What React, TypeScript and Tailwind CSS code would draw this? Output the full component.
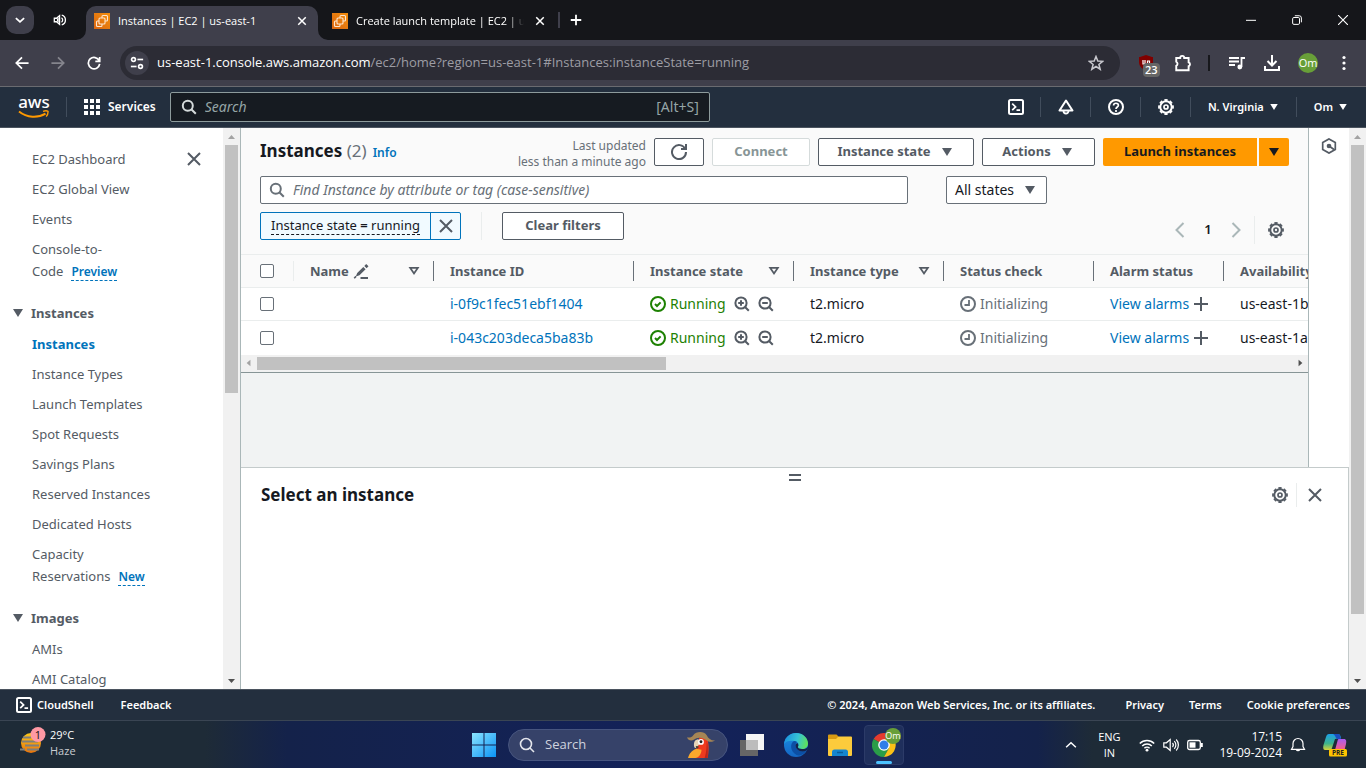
import type { ReactNode } from "react";

type IconProps = { className?: string };

function Svg({ className = "size-4", children, w = 2 }: { className?: string; children: ReactNode; w?: number }) {
  return (
    <svg viewBox="0 0 16 16" fill="none" stroke="currentColor" strokeWidth={w} className={`shrink-0 ${className}`} aria-hidden="true">
      {children}
    </svg>
  );
}

const Caret = ({ className }: IconProps) => (
  <Svg className={className}><path d="M3 4h10l-5 8z" fill="currentColor" stroke="none" /></Svg>
);
const SortCaret = () => (
  <Svg className="size-4 text-[#545b64]"><path d="M4.200 4.900h7.600L8 10.500z" strokeWidth="1.8" /></Svg>
);
const Search = ({ className }: IconProps) => (
  <Svg className={className}><circle cx="6.800" cy="6.800" r="5" /><path d="m10.300 10.300 4.500 4.500" /></Svg>
);
const Close = ({ className }: IconProps) => (
  <Svg className={className}><path d="m2 2 12 12M14 2 2 14" /></Svg>
);
const Gear = ({ className }: IconProps) => (
  <Svg className={className}>
    <circle cx="8" cy="8" r="5.7" strokeWidth="1.9" />
    <circle cx="8" cy="8" r="7" strokeWidth="1.8" pathLength="32" strokeDasharray="2.4 1.6" strokeDashoffset="1.2" />
    <circle cx="8" cy="8" r="2" strokeWidth="1.7" />
  </Svg>
);
const Shell = ({ className }: IconProps) => (
  <Svg className={className}>
    <rect x="1" y="1" width="14" height="14" rx="1.5" />
    <path d="m4.2 4.6 3.4 3.3-3.4 3.3M8.5 11.2h3.6" strokeWidth="1.7" />
  </Svg>
);
const Check = () => (
  <Svg className="size-4 text-[#1d8102]"><circle cx="8" cy="8" r="7" /><path d="m5 8 2 2 3.6-3.6" /></Svg>
);
const Pending = () => (
  <Svg className="size-4 text-[#687078]"><circle cx="8" cy="8" r="7" /><path d="M4.5 9H9V4" strokeWidth="1.8" /></Svg>
);
const Zoom = ({ plus }: { plus?: boolean }) => (
  <Svg className="size-4 text-[#545b64]">
    <circle cx="7" cy="7" r="5.6" /><path d="m11 11 3.8 3.8M4.2 7h5.6" />{plus && <path d="M7 4.2v5.6" />}
  </Svg>
);
const Edit = () => (
  <Svg className="size-4 text-[#545b64]" w={1}>
    <path d="M2.8 13.600 4.200 10 10.300 3.900l2.300 2.300-6.100 6.100zM11.300 2.900 13.200 1l2.300 2.300-1.900 1.900z" fill="currentColor" stroke="none" />
    <path d="M1.200 15.200 3 13.400" strokeWidth="1.6" /><path d="M7.500 15H15" strokeWidth="2" />
  </Svg>
);
const Plus = () => (
  <Svg className="size-4 text-[#545b64]"><path d="M8 1v14M1 8h14" /></Svg>
);

function Ec2Favicon() {
  return (
    <svg viewBox="0 0 16 16" className="size-4 shrink-0" aria-hidden="true">
      <defs><linearGradient id="ec2" x1="0" y1="1" x2="1" y2="0"><stop stopColor="#d86613" /><stop offset="1" stopColor="#f58f0c" /></linearGradient></defs>
      <rect width="16" height="16" fill="url(#ec2)" />
      <g fill="none" stroke="#fde6cf" strokeWidth="1.100">
        <path d="M5 8H3.500a1 1 0 0 0-1 1v3.500a1 1 0 0 0 1 1H7a1 1 0 0 0 1-1V11" />
        <rect x="5" y="5" width="6" height="6" rx="1" />
        <path d="M8 5V3.500a1 1 0 0 1 1-1h3.500a1 1 0 0 1 1 1V7a1 1 0 0 1-1 1H11" />
      </g>
    </svg>
  );
}

function Tab({ title, active }: { title: string; active?: boolean }) {
  return (
    <div className={active ? "relative flex h-[34px] w-[232px] items-center gap-2 self-end rounded-t-[10px] bg-[#3f3f4b] px-2 pb-1" : "flex h-[34px] w-[232px] items-center gap-2 self-end px-2 pb-1"}>
      {active && (
        <>
          <svg viewBox="0 0 10 10" className="absolute -left-2.5 bottom-0 size-2.5 text-[#3f3f4b]" aria-hidden="true"><path d="M10 0v10H0A10 10 0 0 0 10 0z" fill="currentColor" /></svg>
          <svg viewBox="0 0 10 10" className="absolute -right-2.5 bottom-0 size-2.5 text-[#3f3f4b]" aria-hidden="true"><path d="M0 0v10h10A10 10 0 0 1 0 0z" fill="currentColor" /></svg>
        </>
      )}
      <Ec2Favicon />
      <span className={active ? "min-w-0 flex-1 overflow-hidden text-[11px] whitespace-nowrap" : "min-w-0 flex-1 overflow-hidden mask-r-from-90% text-[11px] whitespace-nowrap"}>{title}</span>
      <button aria-label={`Close ${title}`} className="flex size-4 items-center justify-center">
        <Svg className="size-2.5" w={2.4}><path d="m2 2 12 12M14 2 2 14" /></Svg>
      </button>
    </div>
  );
}

function Chrome() {
  return (
    <header className="shrink-0 text-white">
      <div className="flex h-10 items-center bg-[#15161a]">
        <button aria-label="Search tabs" className="ml-1.5 flex size-7 items-center justify-center rounded-[10px] bg-[#3f3f4b]">
          <Svg className="size-3" w={2.4}><path d="m2.5 5.5 5.500 5 5.500-5" /></Svg>
        </button>
        <button aria-label="Mute tab" className="mr-[19px] ml-[19px]">
          <Svg className="size-3.5" w={1.5}><path d="M1.500 6v4h2.500l3.500 3V3L4 6z" /><path d="M4.500 6.500v3L6.500 11V5z" fill="currentColor" stroke="none" /><path d="M9.700 5.500a3 3 0 0 1 0 5M10 2.500a5.700 5.700 0 0 1 0 11" /></Svg>
        </button>
        <Tab title="Instances | EC2 | us-east-1" active />
        <div className="ml-1.5 flex h-full"><Tab title="Create launch template | EC2 | us-east-1" /></div>
        <span className="ml-0.5 h-4 w-0.5 bg-[#3f3f4b]" />
        <button aria-label="New tab" className="ml-2.5"><Svg className="size-3" w={2.4}><path d="M8 1v14M1 8h14" /></Svg></button>
        <div className="ml-auto flex items-center gap-9 pr-[18px]">
          <button aria-label="Minimize"><Svg className="size-2.5" w={1.6}><path d="M0 8.500h16" /></Svg></button>
          <button aria-label="Restore"><Svg className="size-2.5" w={1.6}><rect x="1" y="4" width="11" height="11" rx="2" /><path d="M4.500 1.200h7a3.500 3.500 0 0 1 3.500 3.500v7" /></Svg></button>
          <button aria-label="Close"><Svg className="size-2.5" w={1.8}><path d="m0 0 16 16M16 0 0 16" /></Svg></button>
        </div>
      </div>
      <div className="flex h-[47px] items-center border-b border-[#6a6b70] bg-[#3f3f4b] pr-3.5 pl-[15px]">
        <button aria-label="Back"><Svg className="size-3.5"><path d="M15.500 8H2M8 1.500 1.500 8 8 14.500" /></Svg></button>
        <button aria-label="Forward" className="ml-[22px] text-[#85858d]"><Svg className="size-3.5"><path d="M.5 8H14M8 1.500 14.500 8 8 14.500" /></Svg></button>
        <button aria-label="Reload" className="ml-[22px]"><Svg className="size-3.5"><path d="M14 5.500A6.500 6.500 0 1 0 14.500 9M14.500 1v5h-5" /></Svg></button>
        <div className="ml-[19px] flex h-[34px] flex-1 items-center rounded-full bg-[#2c2c35] pr-4 pl-[5px]">
          <button aria-label="Site information" className="flex size-6 items-center justify-center rounded-full bg-[#3f3f4b]">
            <Svg className="size-3.5" w={1.9}><circle cx="4" cy="4" r="2.200" /><path d="M8.500 4H15" /><circle cx="12" cy="12" r="2.200" /><path d="M1 12h6.500" /></Svg>
          </button>
          <p className="ml-2 text-[13px] text-[#9d9da4]"><span className="text-white">us-east-1.console.aws.amazon.com</span>/ec2/home?region=us-east-1#Instances:instanceState=running</p>
          <button aria-label="Bookmark" className="ml-auto text-[#c9c9cf]"><Svg className="size-4" w={1.5}><path d="m8 1.500 1.800 4.500 4.900.3-3.800 3.100 1.300 4.800L8 11.500l-4.200 2.700 1.300-4.800-3.800-3.100 4.900-.3z" /></Svg></button>
        </div>
        <button aria-label="uBlock Origin" className="relative ml-[18px] text-[10px]">
          <svg viewBox="0 0 16 16" className="size-4" aria-hidden="true"><path d="M8 0 2 2H1v5c0 5 4 7 7 9 3-2 7-4 7-9V2h-1z" fill="#800000" /><path d="M5 5v4h2V5M9.500 9.500V6h2v3.200h-2" fill="none" stroke="#fff" strokeWidth="1.200" /></svg>
          <span className="absolute top-2 left-[5px] rounded bg-[#666] px-0.5 text-[11px] leading-3.5 font-semibold">23</span>
        </button>
        <button aria-label="Extensions" className="ml-5"><Svg className="size-[18px]" w={1.7}><path d="M2 3.500h3.500a1.800 1.800 0 0 1 3.600 0H13V7.500a1.800 1.800 0 0 1 0 3.400V14.500H2v-4a2 2 0 0 0 0-3.600z" /></Svg></button>
        <span className="ml-4 h-4 w-0.5 bg-[#17181c]" />
        <button aria-label="Media controls" className="ml-[19px]"><Svg className="size-4" w={1.8}><path d="M0 3h10M0 6.500h10M0 10h6M12.500 12V3H16" /><circle cx="11" cy="12" r="1.800" fill="currentColor" stroke="none" /><circle cx="10.800" cy="12" r="1.500" /></Svg></button>
        <button aria-label="Downloads" className="ml-[19px]"><Svg className="size-4" w={2}><path d="M8 0v10M3.500 6 8 10.500 12.500 6M1 11v4h14v-4" /></Svg></button>
        <button aria-label="Profile" className="ml-[18px] flex size-5 items-center justify-center rounded-full bg-[#689f38] text-[11px]">Om</button>
        <button aria-label="More" className="ml-[18px]"><Svg className="size-4"><g fill="currentColor" stroke="none"><circle cx="8" cy="2.500" r="1.600" /><circle cx="8" cy="8" r="1.600" /><circle cx="8" cy="13.500" r="1.600" /></g></Svg></button>
      </div>
    </header>
  );
}

function AwsHeader() {
  return (
    <nav aria-label="AWS" className="flex h-[41px] shrink-0 items-center border-b border-[#4b545f] bg-[#232f3e] font-['Noto_Sans','Open_Sans',sans-serif] text-xs font-semibold text-white">
      <a href="#home" className="ml-[18px] flex w-8 flex-col items-center" aria-label="AWS home">
        <span className="h-3.5 text-[17px] leading-3 font-medium">aws</span>
        <svg viewBox="0 0 32 9" className="h-[9px] w-8" fill="none" stroke="#ff9900" aria-hidden="true"><path d="M1 1.500C9 8 20 8.200 27.500 3.600" strokeWidth="1.900" /><path d="M25 1.300c2-.6 4-.6 5 0 .2 1.800-.5 3.800-1.800 5.300" strokeWidth="1.400" /></svg>
      </a>
      <span className="ml-4 h-5 w-px bg-[#414d5c]" />
      <button className="ml-[17px] flex items-center gap-2">
        <Svg className="size-4"><g fill="currentColor" stroke="none">{[0, 6, 12].map((y) => [0, 6, 12].map((x) => <rect key={`${x}-${y}`} x={x} y={y} width="4" height="4" />))}</g></Svg>
        Services
      </button>
      <label className="ml-3.5 flex h-[30px] w-[540px] items-center rounded-xs border border-[#8d9b9c] bg-[#161b21] px-2.5 text-[#95a5a6]">
        <Search className="size-4 text-[#d5dbdb]" />
        <input aria-label="Search" placeholder="Search" className="ml-2 min-w-0 flex-1 bg-transparent text-sm font-normal italic outline-none placeholder:text-[#95a5a6]" />
        <span className="text-sm font-normal">[Alt+S]</span>
      </label>
      <div className="ml-auto flex items-center pr-[17px]">
        <button aria-label="CloudShell"><Shell /></button>
        <span className="mr-[17px] ml-4 h-5 w-px bg-[#414d5c]" />
        <button aria-label="Notifications"><Svg><path d="M8 1.500 14.500 11.500h-13z" strokeLinejoin="round" /><path d="M5.500 12a2.500 2.500 0 0 0 5 0" strokeWidth="1.800" /></Svg></button>
        <span className="mr-[17px] ml-4 h-5 w-px bg-[#414d5c]" />
        <button aria-label="Help"><Svg><circle cx="8" cy="8" r="7" /><path d="M5.600 6.500C5.600 3.500 10.400 3.600 10.400 6.300 10.400 8 8 8 8 10M8 11v2" strokeWidth="1.700" /></Svg></button>
        <span className="mr-[17px] ml-4 h-5 w-px bg-[#414d5c]" />
        <button aria-label="Settings"><Gear /></button>
        <span className="mr-[17px] ml-4 h-5 w-px bg-[#414d5c]" />
        <button className="flex items-center gap-1 text-[11px]">N. Virginia <Caret className="size-3" /></button>
        <span className="mr-[17px] ml-4 h-5 w-px bg-[#414d5c]" />
        <button className="flex items-center gap-1 text-[11px]">Om <Caret className="size-3" /></button>
      </div>
    </nav>
  );
}

function NavLink({ children, active, tag }: { children: ReactNode; active?: boolean; tag?: string }) {
  return (
    <li className="pl-8">
      <a href="#nav" aria-current={active ? "page" : undefined} className={active ? "block w-32 text-[13px] leading-[22px] font-bold text-[#0073bb]" : "block w-32 text-[13px] leading-[22px] text-[#545b64]"}>
        {children}
        {tag && <span className="ml-2 inline-block border-b border-dashed border-[#0073bb] text-xs leading-4 font-semibold text-[#0073bb]">{tag}</span>}
      </a>
    </li>
  );
}

function NavSection({ title, children }: { title: string; children: ReactNode }) {
  return (
    <section>
      <h2 className="flex items-center gap-[5px] pl-2.5 text-[13px] leading-[22px] font-bold text-[#545b64]"><Caret className="size-4" />{title}</h2>
      <ul className="mt-[9px] flex flex-col gap-2">{children}</ul>
    </section>
  );
}

function VScroll({ thumb }: { thumb: string }) {
  return (
    <div className="flex w-[17px] shrink-0 flex-col items-center bg-[#f1f1f1]">
      <svg viewBox="0 0 17 17" className="size-[17px] shrink-0" aria-hidden="true"><path d="M5 11h7l-3.500-4z" fill="#a3a3a3" /></svg>
      <div className="flex w-full flex-1 flex-col items-center"><div className={`w-[13px] bg-[#c1c1c1] ${thumb}`} /></div>
      <svg viewBox="0 0 17 17" className="size-[17px] shrink-0" aria-hidden="true"><path d="M5 7h7l-3.500 4z" fill="#505050" /></svg>
    </div>
  );
}

function Sidebar() {
  return (
    <aside className="flex w-[241px] shrink-0 border-r border-[#aab7b8] bg-white">
      <div className="h-full flex-1 overflow-hidden pt-5">
        <div className="relative">
          <ul className="flex flex-col gap-2">
            <NavLink>EC2 Dashboard</NavLink>
            <NavLink>EC2 Global View</NavLink>
            <NavLink>Events</NavLink>
            <NavLink tag="Preview">Console-to-<br />Code</NavLink>
          </ul>
          <button aria-label="Close navigation" className="absolute top-[3px] right-[21px] text-[#545b64]"><Close /></button>
        </div>
        <div className="mt-5 flex flex-col gap-5">
          <NavSection title="Instances">
            <NavLink active>Instances</NavLink>
            <NavLink>Instance Types</NavLink>
            <NavLink>Launch Templates</NavLink>
            <NavLink>Spot Requests</NavLink>
            <NavLink>Savings Plans</NavLink>
            <NavLink>Reserved Instances</NavLink>
            <NavLink>Dedicated Hosts</NavLink>
            <NavLink tag="New">Capacity<br />Reservations</NavLink>
          </NavSection>
          <NavSection title="Images">
            <NavLink>AMIs</NavLink>
            <NavLink>AMI Catalog</NavLink>
          </NavSection>
        </div>
      </div>
      <VScroll thumb="h-[47%]" />
    </aside>
  );
}

function Button({ children, className = "" }: { children: ReactNode; className?: string }) {
  return (
    <button className={`flex h-7 items-center justify-center gap-2 rounded-xs border bg-white text-[13px] font-bold whitespace-nowrap ${className}`}>{children}</button>
  );
}

const columns = [
  { name: "Name", w: "w-[140px]", sort: true, edit: true },
  { name: "Instance ID", w: "w-[200px]" },
  { name: "Instance state", w: "w-[160px]", sort: true },
  { name: "Instance type", w: "w-[150px]", sort: true },
  { name: "Status check", w: "w-[150px]" },
  { name: "Alarm status", w: "w-[130px]" },
  { name: "Availability Zone", w: "w-[160px]" },
];

const rows = [
  { id: "i-0f9c1fec51ebf1404", zone: "us-east-1b" },
  { id: "i-043c203deca5ba83b", zone: "us-east-1a" },
];

const Box = ({ label }: { label: string }) => (
  <input type="checkbox" aria-label={label} className="block size-3.5 appearance-none rounded-xs border border-[#687078] bg-white" />
);

function InstancesTable() {
  return (
    <div className="overflow-hidden border-t border-[#eaeded]">
      <table className="w-[1143px] table-fixed border-collapse text-left text-sm text-[#16191f]">
        <thead className="bg-[#fafafa]">
          <tr className="border-b border-[#eaeded] text-[13px] text-[#545b64]">
            <th className="w-[53px] p-0"><div className="flex h-5 items-center border-r border-[#eaeded] pl-[19px]"><Box label="Select all" /></div></th>
            {columns.map((c) => (
              <th key={c.name} className={`px-0 py-1.5 font-bold ${c.w}`}>
                <div className="flex h-5 items-center gap-1 border-r border-[#687078] pr-[11px] pl-4 whitespace-nowrap">
                  {c.name}{c.edit && <Edit />}
                  {c.sort && <span className="ml-auto flex"><SortCaret /></span>}
                </div>
              </th>
            ))}
          </tr>
        </thead>
        <tbody className="bg-white">
          {rows.map((r) => (
            <tr key={r.id} className="h-[33px] border-b border-[#eaeded] whitespace-nowrap last:h-[34px] last:border-0">
              <td className="p-0 pl-[19px]"><Box label={`Select ${r.id}`} /></td>
              <td />
              <td className="p-0 pl-4"><a href="#instance" className="text-[#0073bb]">{r.id}</a></td>
              <td className="p-0 pl-4">
                <div className="flex items-center text-[#1d8102]">
                  <Check /><span className="ml-1 w-[64px]">Running</span>
                  <span className="flex gap-2"><Zoom plus /><Zoom /></span>
                </div>
              </td>
              <td className="p-0 pl-4">t2.micro</td>
              <td className="p-0 pl-4"><div className="flex items-center gap-1 text-[#687078]"><Pending />Initializing</div></td>
              <td className="p-0 pl-4"><div className="flex items-center gap-1"><a href="#alarms" className="text-[#0073bb]">View alarms</a><Plus /></div></td>
              <td className="p-0 pl-4">{r.zone}</td>
            </tr>
          ))}
        </tbody>
      </table>
      <div className="flex h-[17px] items-center bg-[#f1f1f1]">
        <svg viewBox="0 0 17 17" className="size-4" aria-hidden="true"><path d="M10 5v7L6 8.500z" fill="#a3a3a3" /></svg>
        <div className="flex-1"><div className="h-[13px] w-[39.500%] bg-[#c1c1c1]" /></div>
        <svg viewBox="0 0 17 17" className="size-4" aria-hidden="true"><path d="M7 5v7l4-3.500z" fill="#505050" /></svg>
      </div>
    </div>
  );
}

function Instances() {
  return (
    <section className="border-b border-[#879596] bg-[#fafafa]">
      <div className="flex h-[38px] items-start px-[19px] pt-2.5">
        <h1 className="text-[17px] leading-[26px] font-bold text-[#16191f]">Instances <span className="font-normal text-[#687078]">(2)</span></h1>
        <a href="#info" className="ml-1.5 text-xs leading-[30px] font-semibold text-[#0073bb]">Info</a>
        <p className="ml-auto text-right text-xs leading-4 text-[#687078]">Last updated<br />less than a minute ago</p>
        <Button className="ml-2 w-[50px] border-[#545b64] text-[#545b64]"><Svg><path d="M10 5h5V0M15 8a7 7 0 1 1-.700-3" /></Svg></Button>
        <Button className="ml-2 w-[98px] border-[#d5dbdb] text-[#879596]">Connect</Button>
        <Button className="ml-2 w-[156px] border-[#545b64] text-[#545b64]">Instance state<Caret /></Button>
        <Button className="ml-2 w-[113px] border-[#545b64] text-[#545b64]">Actions<Caret /></Button>
        <button className="ml-2 h-7 w-[154px] rounded-l-xs bg-[#ff9900] text-[13px] font-bold text-[#16191f]">Launch instances</button>
        <button aria-label="More launch options" className="ml-0.5 flex h-7 w-[30px] items-center justify-center rounded-r-xs bg-[#ff9900] text-[#16191f]"><Caret /></button>
      </div>
      <div className="mt-2.5 flex items-center pl-[19px]">
        <label className="flex h-7 w-[648px] items-center rounded-xs border border-[#687078] bg-white px-2 text-[#687078]">
          <Search />
          <input aria-label="Find Instance" placeholder="Find Instance by attribute or tag (case-sensitive)" className="ml-2 min-w-0 flex-1 text-sm italic outline-none placeholder:text-[#687078]" />
        </label>
        <button className="ml-[38px] flex h-7 w-[101px] items-center justify-between rounded-xs border border-[#687078] bg-white px-2 text-sm text-[#16191f]">All states<Caret className="size-4 text-[#545b64]" /></button>
      </div>
      <div className="mt-2 flex h-[42px] items-start pl-[19px]">
        <div className="flex h-7 items-stretch rounded-xs border border-[#0073bb] bg-[#f1faff]">
          <button className="flex w-[169px] items-center justify-center text-[13px] text-[#16191f]"><span className="border-b border-dashed border-[#16191f] leading-[17px]">Instance state <b>=</b> running</span></button>
          <button aria-label="Remove filter" className="flex w-[30px] items-center justify-center border-l border-[#0073bb] text-[#545b64]"><Close /></button>
        </div>
        <span className="ml-5 h-7 w-px bg-[#eaeded]" />
        <Button className="ml-5 w-[122px] border-[#545b64] text-[#545b64]">Clear filters</Button>
        <div className="mt-1 ml-auto flex h-7 items-center pr-6">
          <button aria-label="Previous page" className="text-[#aab7b8]"><Svg><path d="M11.500 1 4.500 8l7 7" /></Svg></button>
          <span className="w-10 text-center text-[13px] font-semibold text-[#16191f]">1</span>
          <button aria-label="Next page" className="text-[#aab7b8]"><Svg><path d="m4.500 1 7 7-7 7" /></Svg></button>
          <span className="mr-[13px] ml-2.5 h-7 w-px bg-[#eaeded]" />
          <button aria-label="Preferences" className="text-[#545b64]"><Gear /></button>
        </div>
      </div>
      <InstancesTable />
    </section>
  );
}

function Footer() {
  return (
    <footer className="flex h-[31px] shrink-0 items-center border-t border-[#4b545f] bg-[#232f3e] px-4 font-['Noto_Sans','Open_Sans',sans-serif] text-[11px] font-semibold text-white">
      <button className="flex items-center gap-[5px]"><Shell />CloudShell</button>
      <a href="#feedback" className="ml-[27px]">Feedback</a>
      <span className="ml-auto">© 2024, Amazon Web Services, Inc. or its affiliates.</span>
      <a href="#privacy" className="ml-[30px]">Privacy</a>
      <a href="#terms" className="ml-[25px]">Terms</a>
      <a href="#cookies" className="ml-[25px]">Cookie preferences</a>
    </footer>
  );
}

function Taskbar() {
  return (
    <div className="relative flex h-12 shrink-0 items-center justify-center border-t border-[#3a4553] bg-[linear-gradient(90deg,#1e2b37_0%,#1e2b37_15%,#14224a_21%,#13225a_50%,#14224a_76%,#1e2b37_80%,#1e2b37_100%)] text-xs text-white">
      <button className="absolute top-1.5 left-[18px] flex items-center gap-2 text-left leading-4">
        <svg viewBox="0 0 28 32" className="h-8 w-7" aria-hidden="true">
          <defs><linearGradient id="sun" x1="0" y1="0" x2="0" y2="1"><stop stopColor="#fcc81a" /><stop offset="1" stopColor="#e8730c" /></linearGradient></defs>
          <circle cx="13" cy="16" r="10" fill="url(#sun)" />
          <path d="M5 10.500h8M4 14.500h16M7 18.500h14M2 22.500h5M9 22.500h12" stroke="#7e7f7c" strokeWidth="2" />
          <circle cx="20" cy="7.500" r="7.500" fill="#ff99a4" />
          <text x="20" y="11.500" textAnchor="middle" fontSize="11" fill="#111">1</text>
        </svg>
        <span className="-ml-1 text-[11px]">29°C<br /><span className="text-[#c9cdd2]">Haze</span></span>
      </button>
      <div className="flex items-center pl-2.5">
        <button aria-label="Start">
          <svg viewBox="0 0 24 24" className="size-6" aria-hidden="true"><defs><linearGradient id="win" x1="0" y1="0" x2="1" y2="1"><stop stopColor="#8be4ff" /><stop offset="1" stopColor="#0a93f5" /></linearGradient></defs><path d="M0 0h11.500v11.500H0zM12.500 0H24v11.500H12.500zM0 12.500h11.500V24H0zM12.500 12.500H24V24H12.500z" fill="url(#win)" /></svg>
        </button>
        <label className="ml-3 flex h-8 w-[220px] items-center rounded-full border border-[#47557f] bg-[#364269] pr-3 pl-2.5">
          <Svg className="size-4 text-[#e4e6ec]" w={1.6}><circle cx="7" cy="7" r="5.500" /><path d="m11 11 4 4" /></Svg>
          <input aria-label="Taskbar search" placeholder="Search" className="ml-2.5 min-w-0 flex-1 bg-transparent text-[13px] outline-none placeholder:text-[#cfd3de]" />
          <svg viewBox="0 0 27 27" className="size-7" aria-hidden="true">
            <path d="M12 6h6c4 4 3 14 2 20H2c1-2 6-5 7-9z" fill="#ee3a1e" />
            <path d="M1 26c1-4 3-7 8-9l5 1c0 4-3 8-6 8z" fill="#fba92c" />
            <path d="M19 9c1.500 5 1 11 1 17h-3c2-6 2-11 2-17z" fill="#b9261a" />
            <path d="M11 8C7.500 8 6 11.500 7 15.500c.6 1.200 1.600 1.200 2.200 0L13 12z" fill="#e7d6b8" />
            <path d="M8.500 14.500c0 3 2.300 3 2.900.5z" fill="#443" />
            <circle cx="13.500" cy="10.500" r="2.800" fill="#fff" /><circle cx="13.500" cy="10.300" r="1.400" fill="#222" />
            <path d="M0 6c2 .8 5 0 6-2 3-4 10.500-4 13 0 1.500 3.500 5 5.500 8 5-3 2.500-7 1.500-9-.5-4-3-8.500-2.500-11.500 0C4 10 1 9 0 6z" fill="#a58555" />
          </svg>
        </label>
        <button aria-label="Task view" className="ml-3"><svg viewBox="0 0 24 22" className="h-[22px] w-6" aria-hidden="true"><path d="M0 6h18v16H0z" fill="#666" /><path d="M6 0h18v16H6z" fill="#f5f5f5" /><path d="M6 6h12v10H6z" fill="#bcbcbc" /></svg></button>
        <button aria-label="Edge" className="ml-5">
          <svg viewBox="0 0 24 24" className="size-6" aria-hidden="true">
            <defs>
              <linearGradient id="edge" x1="0" y1=".3" x2="1" y2=".5"><stop stopColor="#1a8fe0" /><stop offset=".55" stopColor="#36c3d6" /><stop offset="1" stopColor="#5fe05a" /></linearGradient>
              <linearGradient id="edgeb" x1="0" y1="0" x2="0" y2="1"><stop stopColor="#1b8ee2" /><stop offset="1" stopColor="#1466c4" /></linearGradient>
            </defs>
            <circle cx="12" cy="12" r="12" fill="url(#edgeb)" />
            <path d="M0 11C1 4 6 0 12 0c7 0 12 5 12 10.500 0 3.500-2.500 5.500-6 5.500-3 0-4.500-1-4-2.500 1.300-1.800.5-5-3.500-5.500C6 7 2 8 0 11z" fill="url(#edge)" />
            <path d="M10 8c-4 2-4.500 10 2.500 14 4 1.500 8-1 10-4.500-5 2.500-10.500 0-11-5 0-1.500.5-2.500 1.500-3.500-1-.7-2-1-3-1z" fill="#0c4fa5" />
            <path d="M11.500 12.500c.5 5 6 7.500 11 5 1.300-1.200 1.600-2.700 1.500-4-1 2-3.500 2.700-6 2.500-3 0-4.500-1-4-2.500.5-.8.500-2-.5-3.500-1.300.5-2 1.500-2 2.500z" fill="#14224a" />
          </svg>
        </button>
        <button aria-label="File Explorer" className="ml-5"><svg viewBox="0 0 24 22" className="h-[22px] w-6" aria-hidden="true"><path d="M0 1.500a1 1 0 0 1 1-1h7.500l2 2v4H0z" fill="#d89a12" /><path d="M0 5h8l2.500-2.500H23a1 1 0 0 1 1 1V21a1 1 0 0 1-1 1H1a1 1 0 0 1-1-1z" fill="#fccb3c" /><path d="M4 22v-4a2.500 2.500 0 0 1 2.500-2.500h11A2.500 2.500 0 0 1 20 18v4z" fill="#1585cf" /><path d="M9 18.500h6" stroke="#0b5c98" strokeWidth="1.500" /></svg></button>
        <button aria-label="Google Chrome" className="relative ml-3 flex size-10 items-center justify-center rounded border border-[#2c3b68] bg-[#1f2f5c]">
          <svg viewBox="0 0 24 24" className="size-6" aria-hidden="true"><path d="M12 12 1.600 6a12 12 0 0 1 20.800 0z" fill="#e33b2e" /><path d="M12 12 1.600 6A12 12 0 0 0 12 24l5-9z" fill="#2a9d48" /><path d="M12 12h0l5 3-5 9A12 12 0 0 0 22.400 6.500H12z" fill="#fbc116" /><circle cx="12" cy="12" r="5.800" fill="#fff" /><circle cx="12" cy="12" r="4.500" fill="#2f7de9" /></svg>
          <span className="absolute top-0.5 right-0.5 flex size-4 items-center justify-center rounded-full bg-[#689f38] text-[9px]">Om</span>
          <span className="absolute bottom-0 h-[3px] w-4 rounded-full bg-[#4cc2ff]" />
        </button>
      </div>
      <div className="absolute top-0 right-[19px] flex h-full items-center leading-4">
        <button aria-label="Hidden icons"><Svg className="size-3" w={2}><path d="m1.500 11 6.500-6 6.500 6" /></Svg></button>
        <button className="ml-5 w-6 text-center text-[11px]">ENG<br />IN</button>
        <button aria-label="Quick settings" className="ml-[18px] flex items-center gap-2">
          <Svg w={1.500}><path d="M.8 6.500a10 10 0 0 1 14.400 0M3.200 9a6.800 6.800 0 0 1 9.600 0M5.400 11.300a3.700 3.700 0 0 1 5.200 0" /><circle cx="8" cy="13.200" r="1.400" fill="currentColor" stroke="none" /></Svg>
          <Svg w={1.200}><path d="M.8 5.800v4.400h2.600l3.800 3.300v-11L3.400 5.800zM9.500 6a3 3 0 0 1 0 4M11.300 4.200a5.400 5.400 0 0 1 0 7.600M13.200 2.500a8 8 0 0 1 0 11" /></Svg>
          <Svg w={1.300}><rect x=".7" y="3.500" width="12.600" height="9" rx="1.800" /><path d="M2.500 5.300h6v5.400h-6z" fill="currentColor" stroke="none" /><path d="M14.800 6v4" strokeWidth="2" /></Svg>
        </button>
        <button className="ml-4 text-right whitespace-nowrap">17:15<br />19-09-2024</button>
        <button aria-label="Notification centre" className="ml-2"><Svg w={1.200}><path d="M1.500 12.300h13L13 9.500V6.500a5 5 0 0 0-10 0v3zM6.300 12.500a1.800 1.800 0 0 0 3.400 0" /></Svg></button>
        <button aria-label="Copilot" className="ml-[17px]">
          <svg viewBox="0 0 24 24" className="size-6" aria-hidden="true">
            <defs><linearGradient id="cpa" x1="0" y1="0" x2="0" y2="1"><stop stopColor="#1ba0e8" /><stop offset=".6" stopColor="#3fb48a" /><stop offset="1" stopColor="#d8d43a" /></linearGradient><linearGradient id="cpb" x1="0" y1="0" x2="0" y2="1"><stop stopColor="#a85cf0" /><stop offset="1" stopColor="#fb5f83" /></linearGradient></defs>
            <path d="M6 1h9c2 0 2.500 2 3 4l-6 1-3 9c-.5 1.500-1.500 2-3 2H2c-2 0-2-3-1.500-5L3 4c.5-2 1.500-3 3-3z" fill="url(#cpa)" />
            <path d="M10 1h5c2 0 2.500 2.500 3 5h-4c-1 0-1.500-4-4-5z" fill="#1b4fc0" />
            <path d="M16 6h5c2.500 0 2.500 2.500 2 5l-1.500 6H12l2.500-9c.3-1.500.8-2 1.500-2z" fill="url(#cpb)" />
            <rect x="6" y="16" width="18" height="7.500" rx="1.500" fill="#ffc400" />
            <text x="15" y="22" textAnchor="middle" fontSize="6.500" fontWeight="700" fill="#222">PRE</text>
          </svg>
        </button>
      </div>
    </div>
  );
}

export default function App() {
  return (
    <div className="flex h-screen flex-col overflow-hidden font-['Open_Sans','Noto_Sans',sans-serif]">
      <Chrome />
      <AwsHeader />
      <div className="flex min-h-0 flex-1 font-['Noto_Sans','Open_Sans',sans-serif]">
        <Sidebar />
        <div className="flex min-w-0 flex-1 flex-col bg-white">
          <div className="flex min-h-0 flex-[341] basis-0">
            <main className="min-w-0 flex-1 overflow-hidden bg-[#f1f3f3]"><Instances /></main>
            <div className="flex w-[41px] shrink-0 justify-center border-l border-[#aab7b8] pt-2.5 text-[#545b64]">
              <button aria-label="Tools" className="h-4"><Svg w={1.700}><path d="M8 .9 14.300 4.400v7.200L8 15.100 1.700 11.600V4.400z" /><path d="m8 8 5 3.500" /><circle cx="8" cy="8" r="1.500" fill="currentColor" /></Svg></button>
            </div>
          </div>
          <section className="flex min-h-0 flex-[222] basis-0 flex-col border-t border-r border-[#c4cbcb] bg-white">
            <button aria-label="Resize panel" className="mx-auto mt-1.5 h-[7px] w-3 border-y-2 border-[#545b64]" />
            <div className="flex items-center pr-[25px] pl-5">
              <h2 className="text-[17px] leading-7 font-bold text-[#16191f]">Select an instance</h2>
              <button aria-label="Panel preferences" className="ml-auto text-[#545b64]"><Gear /></button>
              <span className="mr-2.5 ml-2 h-6 w-px bg-[#eaeded]" />
              <button aria-label="Close panel" className="text-[#545b64]"><Close /></button>
            </div>
          </section>
        </div>
        <VScroll thumb="h-[89%]" />
      </div>
      <Footer />
      <Taskbar />
    </div>
  );
}
